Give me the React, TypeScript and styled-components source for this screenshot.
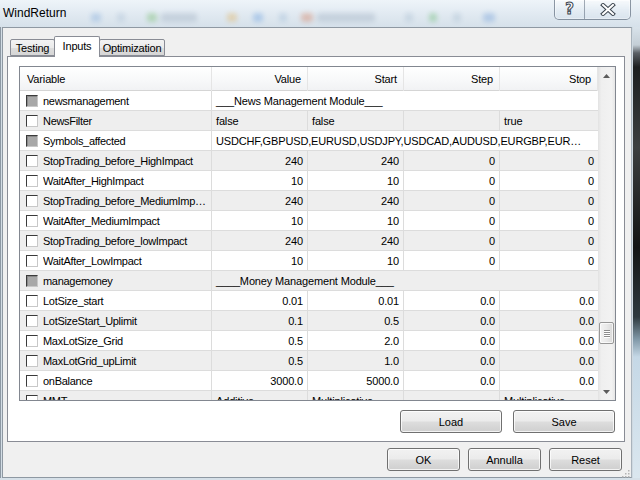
import styled, { createGlobalStyle } from "styled-components";

const GlobalStyle = createGlobalStyle`
  html, body {
    margin: 0;
    padding: 0;
    background: #2a2a2a;
  }
  body {
    font-family: "Liberation Sans", Arial, sans-serif;
    color: #000;
  }
`;

type Row = {
  name: string;
  locked?: boolean;
  span?: string;
  cells?: string[];
  textual?: boolean;
};

const rows: Row[] = [
  { name: "newsmanagement", locked: true, span: "___News Management Module___" },
  { name: "NewsFilter", cells: ["false", "false", "", "true"], textual: true },
  {
    name: "Symbols_affected",
    locked: true,
    span: "USDCHF,GBPUSD,EURUSD,USDJPY,USDCAD,AUDUSD,EURGBP,EURJPY,GBPJPY",
  },
  { name: "StopTrading_before_HighImpact", cells: ["240", "240", "0", "0"] },
  { name: "WaitAfter_HighImpact", cells: ["10", "10", "0", "0"] },
  { name: "StopTrading_before_MediumImpact", cells: ["240", "240", "0", "0"] },
  { name: "WaitAfter_MediumImpact", cells: ["10", "10", "0", "0"] },
  { name: "StopTrading_before_lowImpact", cells: ["240", "240", "0", "0"] },
  { name: "WaitAfter_LowImpact", cells: ["10", "10", "0", "0"] },
  { name: "managemoney", locked: true, span: "____Money Management Module___" },
  { name: "LotSize_start", cells: ["0.01", "0.01", "0.0", "0.0"] },
  { name: "LotSizeStart_Uplimit", cells: ["0.1", "0.5", "0.0", "0.0"] },
  { name: "MaxLotSize_Grid", cells: ["0.5", "2.0", "0.0", "0.0"] },
  { name: "MaxLotGrid_upLimit", cells: ["0.5", "1.0", "0.0", "0.0"] },
  { name: "onBalance", cells: ["3000.0", "5000.0", "0.0", "0.0"] },
  {
    name: "MMT",
    cells: ["Additive", "Multiplicative", "", "Multiplicative"],
    textual: true,
  },
];

const headers = ["Value", "Start", "Step", "Stop"];

const Arrow = ({ down }: { down?: boolean }) => (
  <svg width="7" height="4" viewBox="0 0 7 4">
    <polygon
      points={down ? "0,0 7,0 3.5,4" : "0,4 7,4 3.5,0"}
      fill="#5c5c5c"
    />
  </svg>
);

const CloseGlyph = () => (
  <svg width="16" height="13" viewBox="0 0 16 13">
    <path
      d="M3 2 L13 11 M13 2 L3 11"
      stroke="#3d4650"
      strokeWidth="4"
      strokeLinecap="square"
      fill="none"
    />
    <path
      d="M3 2 L13 11 M13 2 L3 11"
      stroke="#ffffff"
      strokeWidth="2"
      strokeLinecap="square"
      fill="none"
    />
  </svg>
);

const Grip = () => (
  <svg width="10" height="10" viewBox="0 0 10 10">
    {[
      [8, 0],
      [8, 3],
      [5, 3],
      [8, 6],
      [5, 6],
      [2, 6],
    ].map(([x, y], i) => (
      <rect key={i} x={x} y={y + 2} width="1.5" height="1.5" fill="#b4b4b4" />
    ))}
  </svg>
);

const blobs = [
  { gap: 88, w: 10, c: "#6f9fd8" },
  { gap: 16, w: 8, c: "#9fb6cf" },
  { gap: 22, w: 10, c: "#5ab04a" },
  { gap: 4, w: 36, c: "#93a4b8" },
  { gap: 30, w: 10, c: "#e3a63a" },
  { gap: 16, w: 10, c: "#4f8fdc" },
  { gap: 16, w: 8, c: "#8fb0d0" },
  { gap: 14, w: 12, c: "#d2653c" },
  { gap: 4, w: 58, c: "#93a4b8" },
  { gap: 30, w: 8, c: "#9bb3c9" },
  { gap: 16, w: 8, c: "#4caf50" },
  { gap: 16, w: 8, c: "#9bb3c9" },
  { gap: 22, w: 12, c: "#5b8fd4" },
];

const App = () => {
  return (
    <>
      <GlobalStyle />
      <Window>
        <TitleBar>
          <Title>WindReturn</Title>
          <Backdrop>
            {blobs.map((b, i) => (
              <Blob key={i} $gap={b.gap} $w={b.w} $color={b.c} />
            ))}
          </Backdrop>
          <CaptionButtons>
            <CaptionButton $width={29}>
              <HelpGlyph>?</HelpGlyph>
            </CaptionButton>
            <CaptionButton $width={45} $divider>
              <CloseGlyph />
            </CaptionButton>
          </CaptionButtons>
        </TitleBar>
        <Middle>
          <LeftEdge />
          <Client>
            <TabStrip>
              <Tab $width={45}>Testing</Tab>
              <Tab $width={46} $active>
                Inputs
              </Tab>
              <Tab $width={66}>Optimization</Tab>
            </TabStrip>
            <Panel>
              <Grid>
                <Table>
                  <HeaderRow>
                    <HeaderCell>Variable</HeaderCell>
                    {headers.map((h) => (
                      <HeaderCell key={h} $right>
                        {h}
                      </HeaderCell>
                    ))}
                  </HeaderRow>
                  <Body>
                    {rows.map((row, i) => (
                      <GridRow key={row.name} $striped={i % 2 === 1}>
                        <NameCell>
                          <CheckBox $locked={row.locked} />
                          <NameText>{row.name}</NameText>
                        </NameCell>
                        {row.span ? (
                          <SpanCell>{row.span}</SpanCell>
                        ) : (
                          row.cells!.map((c, j) => (
                            <Cell key={j} $right={!row.textual} $last={j === 3}>
                              {c}
                            </Cell>
                          ))
                        )}
                      </GridRow>
                    ))}
                  </Body>
                </Table>
                <ScrollBar>
                  <ScrollButton>
                    <Arrow />
                  </ScrollButton>
                  <Track>
                    <Thumb $offset={238}>
                      <GripLine />
                      <GripLine />
                      <GripLine />
                      <GripLine />
                    </Thumb>
                  </Track>
                  <ScrollButton>
                    <Arrow down />
                  </ScrollButton>
                </ScrollBar>
              </Grid>
              <PanelButtons>
                <Button $width={102}>Load</Button>
                <Button $width={102}>Save</Button>
              </PanelButtons>
            </Panel>
            <DialogButtons>
              <Button $width={73}>OK</Button>
              <Button $width={73}>Annulla</Button>
              <Button $width={73}>Reset</Button>
            </DialogButtons>
            <Gripper>
              <Grip />
            </Gripper>
          </Client>
          <RightEdge />
        </Middle>
        <BottomEdge />
      </Window>
    </>
  );
};

export default App;

const Window = styled.div`
  width: 640px;
  height: 480px;
  display: flex;
  flex-direction: column;
  overflow: hidden;
  background: linear-gradient(180deg, #e6eef5 0%, #d9e4ed 100%);
`;

const TitleBar = styled.div`
  height: 27px;
  display: flex;
  align-items: flex-start;
  padding-left: 3px;
  background: linear-gradient(180deg, #eef4f9 0%, #dfe8f0 60%, #d6e1ea 100%);
`;

const Title = styled.div`
  font-size: 12px;
  line-height: 27px;
  color: #000;
  flex: none;
`;

const Backdrop = styled.div`
  flex: 1;
  display: flex;
  align-items: center;
  height: 26px;
  margin-left: -63px;
  padding-top: 8px;
  box-sizing: border-box;
  filter: blur(2.5px);
  opacity: 0.32;
  overflow: hidden;
`;

const Blob = styled.span<{ $gap: number; $w: number; $color: string }>`
  flex: none;
  width: ${(p) => p.$w}px;
  height: 9px;
  margin-left: ${(p) => p.$gap}px;
  border-radius: 3px;
  background: ${(p) => p.$color};
`;

const CaptionButtons = styled.div`
  flex: none;
  display: flex;
  height: 19px;
  margin-right: 9px;
  border: 1px solid rgba(60, 75, 95, 0.55);
  border-top: none;
  border-radius: 0 0 5px 5px;
  overflow: hidden;
  box-shadow: inset 0 0 0 1px rgba(255, 255, 255, 0.6);
`;

const CaptionButton = styled.div<{ $width: number; $divider?: boolean }>`
  width: ${(p) => p.$width}px;
  display: flex;
  align-items: center;
  justify-content: center;
  background: linear-gradient(
    180deg,
    rgba(255, 255, 255, 0.55) 0%,
    rgba(230, 238, 245, 0.35) 50%,
    rgba(210, 224, 236, 0.35) 100%
  );
  border-left: ${(p) => (p.$divider ? "1px solid rgba(60, 75, 95, 0.45)" : "none")};
`;

const HelpGlyph = styled.span`
  font-family: "DejaVu Sans", sans-serif;
  font-size: 15px;
  font-weight: bold;
  line-height: 15px;
  color: #ffffff;
  -webkit-text-stroke: 1px #3d4650;
`;

const Middle = styled.div`
  flex: 1;
  display: flex;
`;

const LeftEdge = styled.div`
  width: 2px;
  background: linear-gradient(90deg, #8d98a3 0 1px, #d3dde5 1px);
`;

const RightEdge = styled.div`
  flex: 1;
  background: linear-gradient(
    180deg,
    #d9e3eb 0px,
    #c4ced6 18px,
    #5b6066 26px,
    #1d1f20 40px,
    #3c3f40 120px,
    #131414 220px,
    #2f3a3f 290px,
    #7f97a6 312px,
    #c5d8e6 330px,
    #dbe7ef 453px
  );
  box-shadow: inset 1px 0 0 #cfd9e1;
`;

const BottomEdge = styled.div`
  height: 2px;
  background: #d6e0e8;
`;

const Client = styled.div`
  position: relative;
  width: 630px;
  box-sizing: border-box;
  background: #f0f0f0;
  border: 1px solid #8e98a2;
  border-right-color: #a9b3bc;
  display: flex;
  flex-direction: column;
`;

const TabStrip = styled.div`
  display: flex;
  align-items: flex-end;
  height: 20px;
  margin-top: 8px;
  padding-left: 7px;
  position: relative;
  z-index: 1;
`;

const Tab = styled.div<{ $width: number; $active?: boolean }>`
  width: ${(p) => p.$width}px;
  height: ${(p) => (p.$active ? 21 : 17)}px;
  box-sizing: border-box;
  margin: 0 ${(p) => (p.$active ? "-1px" : "0")};
  margin-bottom: ${(p) => (p.$active ? "-1px" : "0")};
  border: 1px solid #898c95;
  border-bottom: ${(p) => (p.$active ? "none" : "1px solid #898c95")};
  border-radius: 2px 2px 0 0;
  background: ${(p) =>
    p.$active ? "#ffffff" : "linear-gradient(180deg, #f3f3f3 0%, #ebebeb 50%, #dddddd 51%, #d6d6d6 100%)"};
  position: relative;
  z-index: ${(p) => (p.$active ? 2 : 1)};
  font-size: 11px;
  letter-spacing: -0.2px;
  display: flex;
  justify-content: center;
  align-items: ${(p) => (p.$active ? "flex-start" : "center")};
  padding-top: ${(p) => (p.$active ? "2px" : "0")};
  line-height: 14px;
  white-space: nowrap;
`;

const Panel = styled.div`
  height: 386px;
  box-sizing: border-box;
  margin: 0 6px 0 4px;
  border: 1px solid #898c95;
  background: #ffffff;
  padding: 9px 8px 9px 11px;
  display: flex;
  flex-direction: column;
`;

const Grid = styled.div`
  width: 597px;
  height: 335px;
  flex: none;
  box-sizing: border-box;
  border: 1px solid #828790;
  display: flex;
  background: #ffffff;
`;

const Table = styled.div`
  width: 578px;
  display: flex;
  flex-direction: column;
  overflow: hidden;
`;

const columns = "192px 96px 96px 96px 98px";

const HeaderRow = styled.div`
  display: grid;
  grid-template-columns: ${columns};
  height: 24px;
  flex: none;
  box-sizing: border-box;
  border-bottom: 1px solid #d5d5d5;
  background: linear-gradient(180deg, #ffffff 0%, #f7f8f9 60%, #f1f2f4 100%);
`;

const HeaderCell = styled.div<{ $right?: boolean }>`
  font-size: 11px;
  letter-spacing: -0.15px;
  line-height: 25px;
  text-align: ${(p) => (p.$right ? "right" : "left")};
  padding: ${(p) => (p.$right ? "0 6px 0 0" : "0 0 0 7px")};
  border-right: 1px solid #e5e5e5;
`;

const Body = styled.div`
  flex: 1;
  overflow: hidden;
`;

const GridRow = styled.div<{ $striped: boolean }>`
  display: grid;
  grid-template-columns: ${columns};
  height: 20px;
  box-sizing: border-box;
  border-bottom: 1px solid #dcdcdc;
  background: ${(p) => (p.$striped ? "#eeeeee" : "#ffffff")};
`;

const Cell = styled.div<{ $right?: boolean; $last?: boolean }>`
  font-size: 11px;
  letter-spacing: -0.15px;
  line-height: 20px;
  padding: 0 4px;
  white-space: nowrap;
  overflow: hidden;
  text-overflow: ellipsis;
  text-align: ${(p) => (p.$right ? "right" : "left")};
  border-right: ${(p) => (p.$last ? "none" : "1px solid #dcdcdc")};
`;

const SpanCell = styled(Cell)`
  grid-column: 2 / 6;
  border-right: none;
  padding-right: 16px;
`;

const NameCell = styled.div`
  display: flex;
  align-items: center;
  gap: 5px;
  padding-left: 6px;
  border-right: 1px solid #dcdcdc;
  overflow: hidden;
  min-width: 0;
`;

const NameText = styled.span`
  font-size: 11px;
  letter-spacing: -0.3px;
  line-height: 20px;
  white-space: nowrap;
  overflow: hidden;
  text-overflow: ellipsis;
  padding-right: 4px;
`;

const CheckBox = styled.span<{ $locked?: boolean }>`
  flex: none;
  width: 10px;
  height: 10px;
  border: 1px solid;
  border-color: #3a3a3a #c8c8c8 #c8c8c8 #3a3a3a;
  background: ${(p) => (p.$locked ? "#a8a8a8" : "#ffffff")};
  box-shadow: ${(p) => (p.$locked ? "inset 1px 1px 0 #8a8a8a" : "none")};
`;

const ScrollBar = styled.div`
  width: 17px;
  display: flex;
  flex-direction: column;
  background: linear-gradient(90deg, #e2e2e2 0%, #efefef 20%, #f2f2f2 80%, #e6e6e6 100%);
`;

const ScrollButton = styled.div`
  height: 17px;
  flex: none;
  display: flex;
  align-items: center;
  justify-content: center;
`;

const Track = styled.div`
  flex: 1;
  display: flex;
  flex-direction: column;
  align-items: center;
`;

const Thumb = styled.div<{ $offset: number }>`
  margin-top: ${(p) => p.$offset}px;
  width: 15px;
  height: 22px;
  box-sizing: border-box;
  border: 1px solid #979797;
  border-radius: 2px;
  background: linear-gradient(90deg, #f3f3f3 0%, #e9e9e9 50%, #d9d9d9 100%);
  box-shadow: inset 0 0 0 1px rgba(255, 255, 255, 0.7);
  display: flex;
  flex-direction: column;
  align-items: center;
  justify-content: center;
  gap: 1px;
`;

const GripLine = styled.span`
  width: 6px;
  height: 1px;
  background: #8c8c8c;
  box-shadow: 0 1px 0 #ffffff;
`;

const PanelButtons = styled.div`
  display: flex;
  justify-content: flex-end;
  gap: 11px;
  margin-top: 9px;
  padding-right: 1px;
`;

const DialogButtons = styled.div`
  display: flex;
  justify-content: flex-end;
  gap: 8px;
  margin-top: 6px;
  padding-right: 9px;
`;

const Button = styled.div<{ $width: number }>`
  width: ${(p) => p.$width}px;
  height: 23px;
  box-sizing: border-box;
  border: 1px solid #707070;
  border-radius: 3px;
  background: linear-gradient(180deg, #f2f2f2 0%, #ebebeb 48%, #dddddd 52%, #cfcfcf 100%);
  box-shadow: inset 0 0 0 1px rgba(255, 255, 255, 0.75);
  font-size: 11px;
  display: flex;
  align-items: center;
  justify-content: center;
  color: #000;
`;

const Gripper = styled.div`
  position: absolute;
  right: 1px;
  bottom: 1px;
  width: 10px;
  height: 12px;
`;
